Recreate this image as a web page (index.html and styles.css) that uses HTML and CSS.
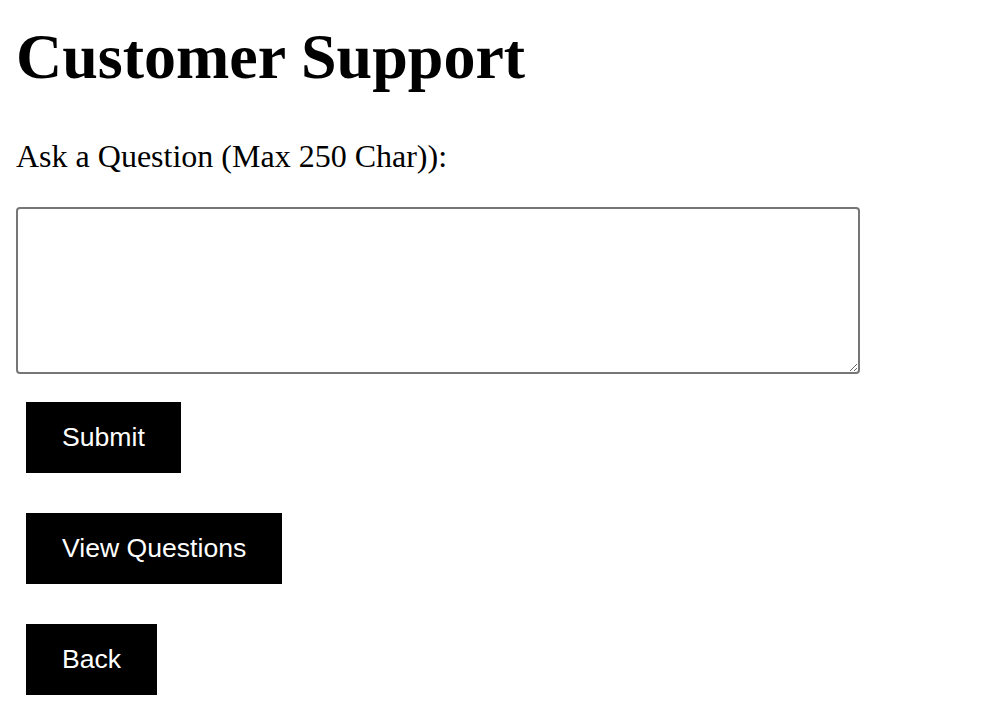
FILE: index.html
```html
<!DOCTYPE html>
<html lang="en">
<head>
<meta charset="utf-8">
<title>Customer Support</title>
<link rel="stylesheet" href="styles.css">
</head>
<body>
<h1 class="title">Customer Support</h1>
<label class="label" for="question">Ask a Question (Max 250 Char)):</label>
<textarea class="question" id="question" maxlength="250"></textarea>
<div class="actions">
  <button class="btn" type="button">Submit</button>
  <button class="btn" type="button">View Questions</button>
  <button class="btn" type="button">Back</button>
</div>
</body>
</html>
```

FILE: styles.css
```css
html, body {
  background: #fff;
}
body {
  margin: 0;
  padding: 20px 16px 0;
  font-family: "Liberation Serif", "Times New Roman", serif;
  color: #000;
}
.title {
  margin: 0;
  font-size: 64px;
  line-height: 74px;
  font-weight: bold;
}
.label {
  display: block;
  margin-top: 44px;
  font-size: 32px;
  line-height: 37px;
}
.question {
  display: block;
  box-sizing: border-box;
  margin: 32px 0 0;
  width: 844px;
  height: 167px;
  border: 2px solid #767676;
  border-radius: 4px;
  background: #fff;
  padding: 4px;
  font-family: "Liberation Mono", monospace;
  font-size: 26px;
}
.actions {
  display: flex;
  flex-direction: column;
  align-items: flex-start;
  gap: 40px;
  margin: 28px 0 0 10px;
}
.btn {
  margin: 0;
  border: none;
  border-radius: 0;
  background: #000;
  color: #fff;
  padding: 20px 36px;
  font-family: "Liberation Sans", Arial, sans-serif;
  font-size: 26.6px;
  line-height: 31px;
  cursor: pointer;
}
```
